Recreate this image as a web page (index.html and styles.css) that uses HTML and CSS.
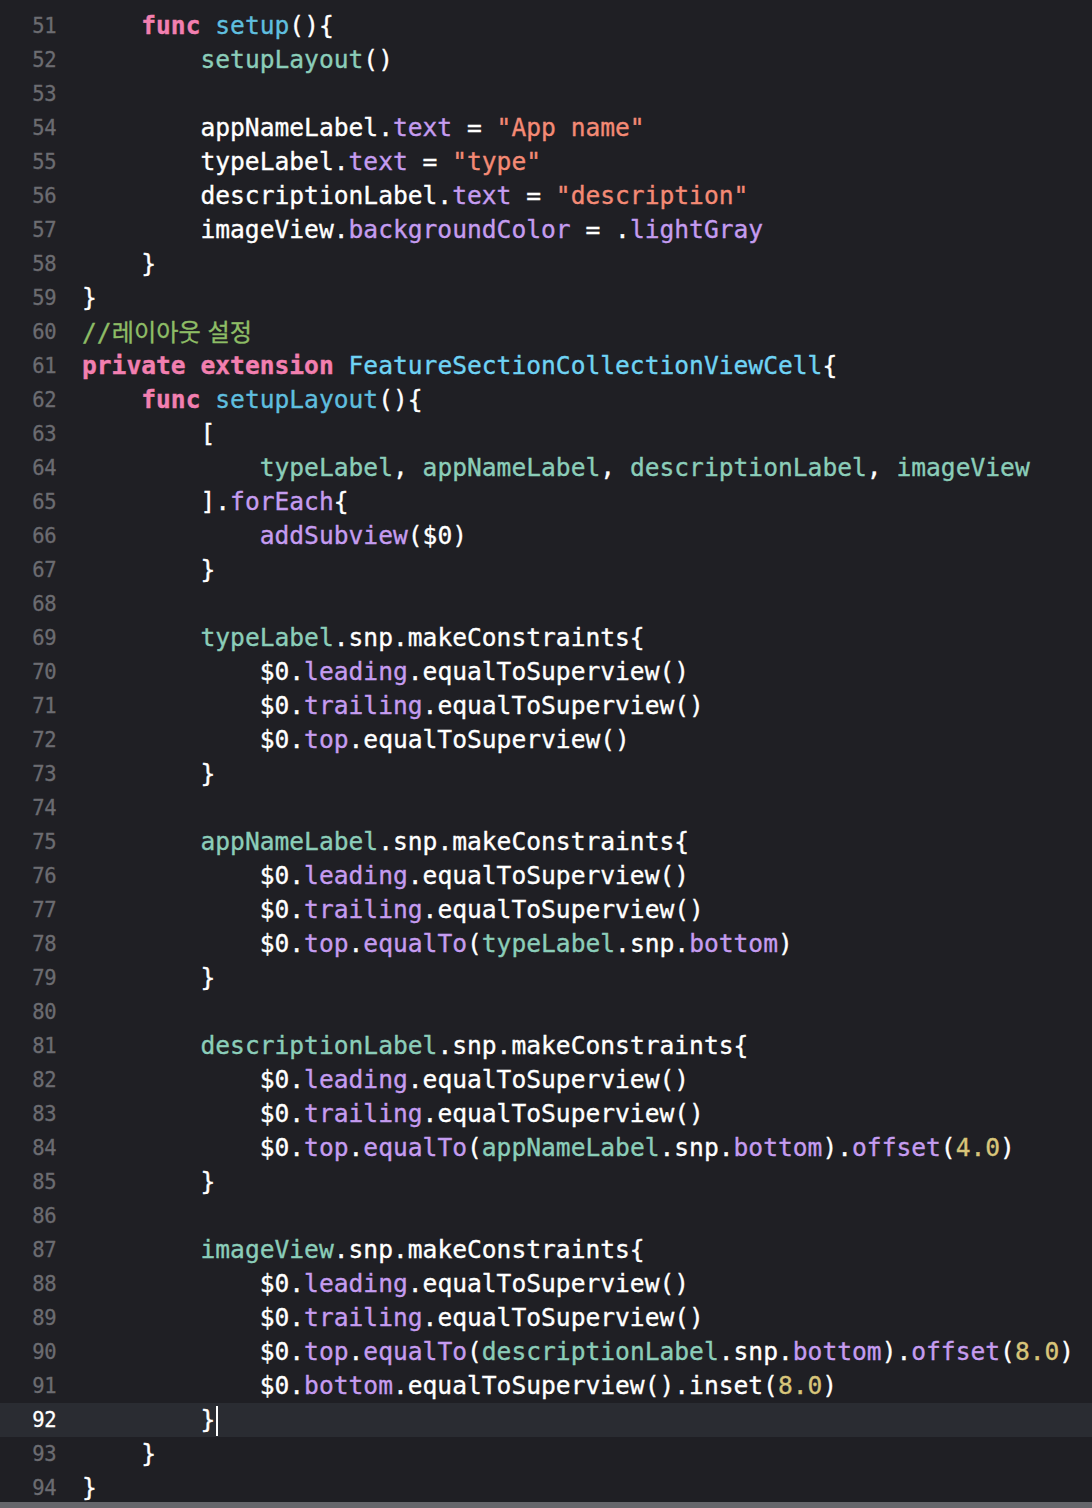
FILE: index.html
```html
<!DOCTYPE html>
<html lang="ko">

<head>
  <meta charset="UTF-8">
  <meta name="viewport" content="width=device-width, initial-scale=1.0">
  <title>FeatureSectionCollectionViewCell.swift</title>
  <link rel="stylesheet" href="styles.css">
</head>

<body>
  <div class="editor">
    <div class="line"><span class="num">51</span><code>    <span class="kw">func</span> <span class="decl">setup</span>(){</code></div>
    <div class="line"><span class="num">52</span><code>        <span class="proj">setupLayout</span>()</code></div>
    <div class="line"><span class="num">53</span><code></code></div>
    <div class="line"><span class="num">54</span><code>        appNameLabel.<span class="lib">text</span> = <span class="str">"App name"</span></code></div>
    <div class="line"><span class="num">55</span><code>        typeLabel.<span class="lib">text</span> = <span class="str">"type"</span></code></div>
    <div class="line"><span class="num">56</span><code>        descriptionLabel.<span class="lib">text</span> = <span class="str">"description"</span></code></div>
    <div class="line"><span class="num">57</span><code>        imageView.<span class="lib">backgroundColor</span> = .<span class="lib">lightGray</span></code></div>
    <div class="line"><span class="num">58</span><code>    }</code></div>
    <div class="line"><span class="num">59</span><code>}</code></div>
    <div class="line"><span class="num">60</span><code><span class="cmt">//<span class="ko">레이아웃 설정</span></span></code></div>
    <div class="line"><span class="num">61</span><code><span class="kw">private</span> <span class="kw">extension</span> <span class="type">FeatureSectionCollectionViewCell</span>{</code></div>
    <div class="line"><span class="num">62</span><code>    <span class="kw">func</span> <span class="decl">setupLayout</span>(){</code></div>
    <div class="line"><span class="num">63</span><code>        [</code></div>
    <div class="line"><span class="num">64</span><code>            <span class="proj">typeLabel</span>, <span class="proj">appNameLabel</span>, <span class="proj">descriptionLabel</span>, <span class="proj">imageView</span></code></div>
    <div class="line"><span class="num">65</span><code>        ].<span class="lib">forEach</span>{</code></div>
    <div class="line"><span class="num">66</span><code>            <span class="lib">addSubview</span>($0)</code></div>
    <div class="line"><span class="num">67</span><code>        }</code></div>
    <div class="line"><span class="num">68</span><code></code></div>
    <div class="line"><span class="num">69</span><code>        <span class="proj">typeLabel</span>.snp.makeConstraints{</code></div>
    <div class="line"><span class="num">70</span><code>            $0.<span class="lib">leading</span>.equalToSuperview()</code></div>
    <div class="line"><span class="num">71</span><code>            $0.<span class="lib">trailing</span>.equalToSuperview()</code></div>
    <div class="line"><span class="num">72</span><code>            $0.<span class="lib">top</span>.equalToSuperview()</code></div>
    <div class="line"><span class="num">73</span><code>        }</code></div>
    <div class="line"><span class="num">74</span><code></code></div>
    <div class="line"><span class="num">75</span><code>        <span class="proj">appNameLabel</span>.snp.makeConstraints{</code></div>
    <div class="line"><span class="num">76</span><code>            $0.<span class="lib">leading</span>.equalToSuperview()</code></div>
    <div class="line"><span class="num">77</span><code>            $0.<span class="lib">trailing</span>.equalToSuperview()</code></div>
    <div class="line"><span class="num">78</span><code>            $0.<span class="lib">top</span>.<span class="lib">equalTo</span>(<span class="proj">typeLabel</span>.snp.<span class="lib">bottom</span>)</code></div>
    <div class="line"><span class="num">79</span><code>        }</code></div>
    <div class="line"><span class="num">80</span><code></code></div>
    <div class="line"><span class="num">81</span><code>        <span class="proj">descriptionLabel</span>.snp.makeConstraints{</code></div>
    <div class="line"><span class="num">82</span><code>            $0.<span class="lib">leading</span>.equalToSuperview()</code></div>
    <div class="line"><span class="num">83</span><code>            $0.<span class="lib">trailing</span>.equalToSuperview()</code></div>
    <div class="line"><span class="num">84</span><code>            $0.<span class="lib">top</span>.<span class="lib">equalTo</span>(<span class="proj">appNameLabel</span>.snp.<span class="lib">bottom</span>).<span class="lib">offset</span>(<span class="number">4.0</span>)</code></div>
    <div class="line"><span class="num">85</span><code>        }</code></div>
    <div class="line"><span class="num">86</span><code></code></div>
    <div class="line"><span class="num">87</span><code>        <span class="proj">imageView</span>.snp.makeConstraints{</code></div>
    <div class="line"><span class="num">88</span><code>            $0.<span class="lib">leading</span>.equalToSuperview()</code></div>
    <div class="line"><span class="num">89</span><code>            $0.<span class="lib">trailing</span>.equalToSuperview()</code></div>
    <div class="line"><span class="num">90</span><code>            $0.<span class="lib">top</span>.<span class="lib">equalTo</span>(<span class="proj">descriptionLabel</span>.snp.<span class="lib">bottom</span>).<span class="lib">offset</span>(<span class="number">8.0</span>)</code></div>
    <div class="line"><span class="num">91</span><code>            $0.<span class="lib">bottom</span>.equalToSuperview().inset(<span class="number">8.0</span>)</code></div>
    <div class="line current"><span class="num">92</span><code>        }<span class="cursor"></span></code></div>
    <div class="line"><span class="num">93</span><code>    }</code></div>
    <div class="line"><span class="num">94</span><code>}</code></div>
  </div>
  <div class="scrollbar"></div>
</body>

</html>
```

FILE: styles.css
```css
html,
body {
  margin: 0;
  background-color: #1f1f24;
}

.editor {
  height: 1502px;
  padding-top: 9px;
  box-sizing: border-box;
  overflow: hidden;
  font-family: "DejaVu Sans Mono", "Liberation Mono", "Noto Sans CJK KR", monospace;
}

.line {
  display: flex;
  align-items: center;
  height: 34px;
}

.line.current {
  background-color: #2a2c32;
}

.line .num {
  width: 56px;
  flex-shrink: 0;
  text-align: right;
  font-size: 20.5px;
  color: #6c6c71;
  letter-spacing: -0.5px;
  -webkit-text-stroke: 0.3px #6c6c71;
}

.line.current .num {
  color: #ffffff;
  -webkit-text-stroke: 0.3px #ffffff;
}

.line code {
  display: block;
  margin-left: 26px;
  white-space: pre;
  font-family: inherit;
  font-size: 24.6px;
  color: #ffffff;
  line-height: 34px;
  -webkit-text-stroke: 0.35px currentColor;
}

.kw {
  color: #f27fb0;
  font-weight: bold;
}

.decl {
  color: #5fbedf;
}

.type {
  color: #6fd3f4;
}

.proj {
  color: #8bcdb9;
}

.lib {
  color: #c59cf0;
}

.str {
  color: #f48a75;
}

.number {
  color: #d8c57a;
}

.cmt {
  color: #8ebd66;
}

.cmt .ko {
  font-family: "Noto Sans CJK KR", sans-serif;
  font-size: 24.2px;
}

.cursor {
  display: inline-block;
  width: 2px;
  height: 30px;
  margin-left: 1px;
  vertical-align: middle;
  background-color: #ffffff;
  -webkit-text-stroke: 0;
}

.scrollbar {
  height: 6px;
  background-color: #66666b;
}
```
